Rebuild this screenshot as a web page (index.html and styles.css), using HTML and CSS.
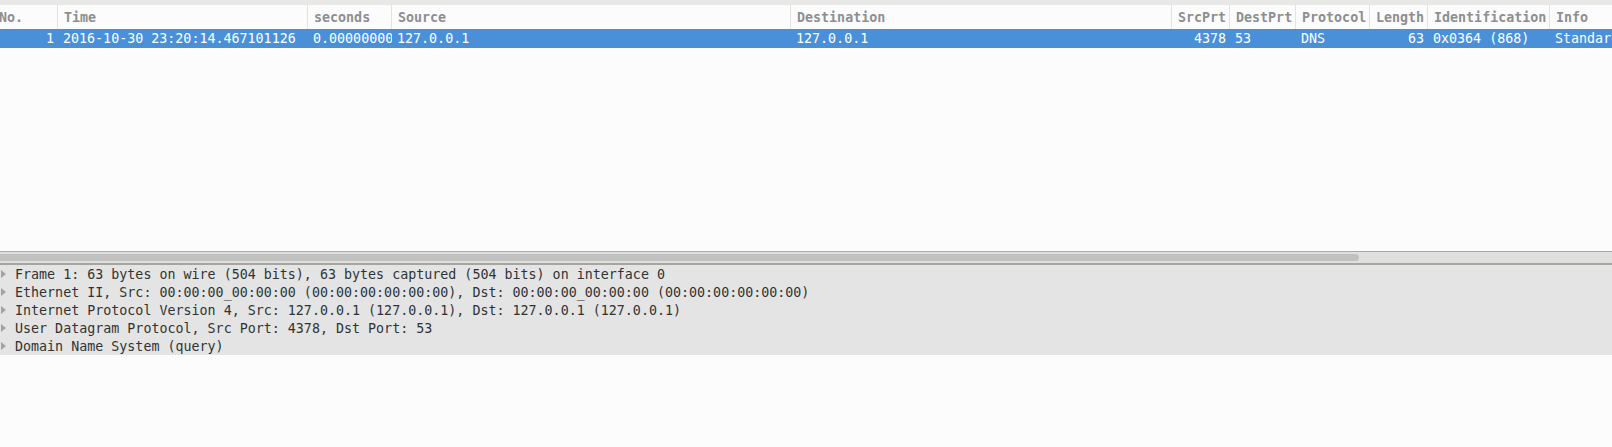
FILE: index.html
```html
<!DOCTYPE html>
<html>
<head>
<meta charset="utf-8">
<link rel="stylesheet" href="styles.css">
</head>
<body>
<div class="app">
  <div class="packet-pane">
    <div class="topband"></div>
    <div class="table">
      <div class="grid header">
        <div class="hc">No.</div>
        <div class="hc">Time</div>
        <div class="hc">seconds</div>
        <div class="hc">Source</div>
        <div class="hc">Destination</div>
        <div class="hc">SrcPrt</div>
        <div class="hc">DestPrt</div>
        <div class="hc">Protocol</div>
        <div class="hc">Length</div>
        <div class="hc">Identification</div>
        <div class="hc last">Info</div>
      </div>
      <div class="grid row selected">
        <div class="dc right">1</div>
        <div class="dc">2016-10-30 23:20:14.467101126</div>
        <div class="dc">0.000000000</div>
        <div class="dc">127.0.0.1</div>
        <div class="dc">127.0.0.1</div>
        <div class="dc right">4378</div>
        <div class="dc">53</div>
        <div class="dc">DNS</div>
        <div class="dc right">63</div>
        <div class="dc">0x0364 (868)</div>
        <div class="dc">Standard query 0x0364 A example.com</div>
      </div>
    </div>
  </div>
  <div class="hscroll"><div class="thumb"></div></div>
  <div class="details">
    <div class="drow"><span class="tri"></span><span>Frame 1: 63 bytes on wire (504 bits), 63 bytes captured (504 bits) on interface 0</span></div>
    <div class="drow"><span class="tri"></span><span>Ethernet II, Src: 00:00:00_00:00:00 (00:00:00:00:00:00), Dst: 00:00:00_00:00:00 (00:00:00:00:00:00)</span></div>
    <div class="drow"><span class="tri"></span><span>Internet Protocol Version 4, Src: 127.0.0.1 (127.0.0.1), Dst: 127.0.0.1 (127.0.0.1)</span></div>
    <div class="drow"><span class="tri"></span><span>User Datagram Protocol, Src Port: 4378, Dst Port: 53</span></div>
    <div class="drow"><span class="tri"></span><span>Domain Name System (query)</span></div>
  </div>
  <div class="rest"></div>
</div>
</body>
</html>
```
FILE: styles.css
```css
html, body {
  margin: 0;
  padding: 0;
  background: #fcfcfc;
  overflow: hidden;
}
body {
  width: 1612px;
  height: 447px;
  font-family: "DejaVu Sans Mono", monospace;
  font-size: 13.333px;
}
.app {
  display: flex;
  flex-direction: column;
  height: 447px;
}
.packet-pane {
  height: 251px;
  background: #fcfcfc;
  overflow: hidden;
}
.topband {
  height: 5px;
  background: #e8e8e7;
}
.table {
  margin-left: -7px;
  width: 2000px;
}
.grid {
  display: grid;
  grid-template-columns: 65px 250px 84px 399px 381px 58px 66px 74px 58px 122px 400px;
}
.header {
  height: 24px;
  background: #fcfcfc;
}
.hc {
  display: flex;
  align-items: center;
  padding-left: 6px;
  color: #8c8f90;
  font-weight: bold;
  border-right: 1px solid #e2e2e2;
  white-space: nowrap;
  overflow: hidden;
}
.hc.last {
  border-right: none;
}
.row {
  height: 19px;
}
.selected {
  background: #4a90d9;
  color: #ffffff;
}
.dc {
  display: flex;
  align-items: center;
  padding: 0 0 0 5px;
  white-space: nowrap;
  overflow: hidden;
}
.dc.right {
  justify-content: flex-end;
  padding: 0 4px 0 0;
}
.hscroll {
  height: 11px;
  border-top: 1px solid #a9a9a7;
  border-bottom: 2px solid #a5a5a3;
  background: #dfdfdd;
  display: flex;
  align-items: center;
}
.thumb {
  width: 1359px;
  height: 7px;
  background: #c1c1bf;
  border-radius: 0 4px 4px 0;
}
.details {
  background: #e4e4e4;
  color: #2e3436;
}
.drow {
  height: 18px;
  display: flex;
  align-items: center;
  white-space: nowrap;
}
.tri {
  width: 0;
  height: 0;
  border-top: 4px solid transparent;
  border-bottom: 4px solid transparent;
  border-left: 5px solid #a3a3a3;
  margin-left: 1px;
  margin-right: 9px;
}
.rest {
  flex: 1;
  background: #fcfcfc;
}
```
